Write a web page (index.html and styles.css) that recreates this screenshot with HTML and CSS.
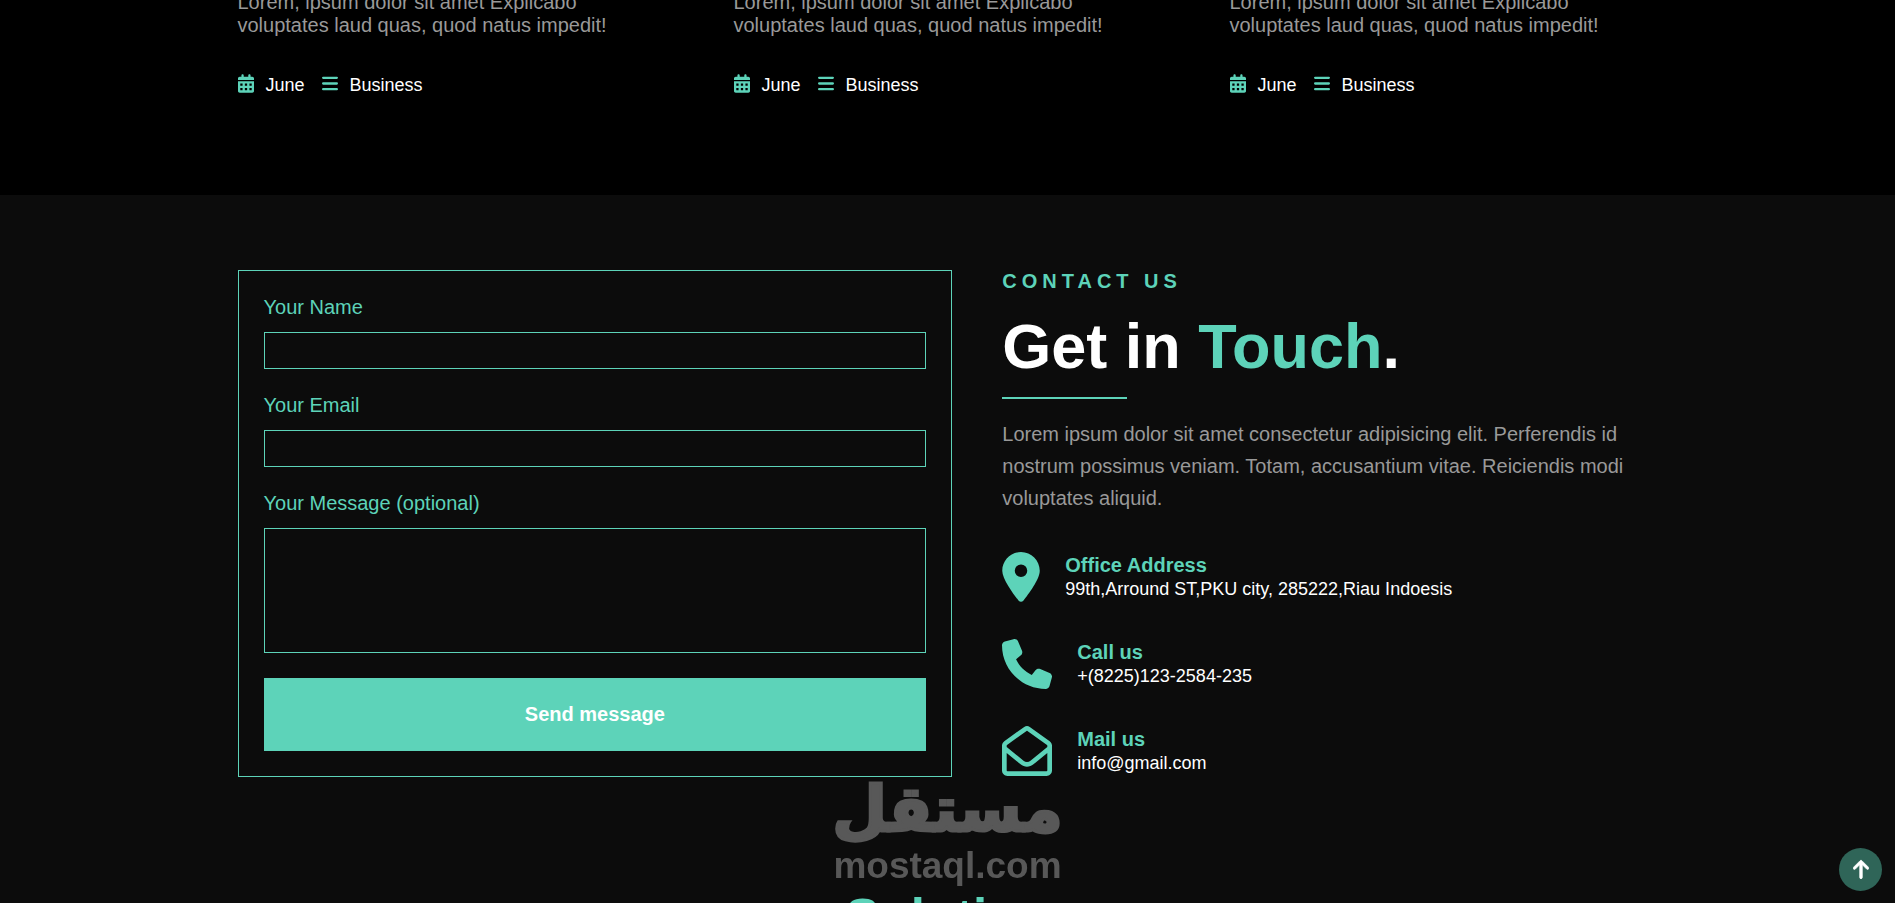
FILE: index.html
```
<!DOCTYPE html>
<html lang="en">
<head>
    <meta charset="UTF-8">
    <meta name="viewport" content="width=device-width, initial-scale=1.0">
    <title>Contact Us</title>
    <link rel="stylesheet" href="styles.css">
</head>
<body>
    <!-- shared icons -->
    <svg class="sprite" aria-hidden="true">
        <symbol id="calendar" viewBox="0 0 448 512">
            <path fill-rule="evenodd" d="M128 0c17.700 0 32 14.300 32 32V64H288V32c0-17.700 14.300-32 32-32s32 14.300 32 32V64h48c26.500 0 48 21.500 48 48v48H0V112C0 85.500 21.500 64 48 64H96V32c0-17.700 14.300-32 32-32zM0 192H448V464c0 26.500-21.500 48-48 48H48c-26.500 0-48-21.500-48-48V192zM64 256v64h64v-64zM192 256v64h64v-64zM320 256v64h64v-64zM64 384v64h64v-64zM192 384v64h64v-64zM320 384v64h64v-64z"/>
        </symbol>
        <symbol id="bars" viewBox="0 0 448 512">
            <path d="M32 64H416a32 32 0 0 1 0 64H32a32 32 0 0 1 0-64zM32 224H416a32 32 0 0 1 0 64H32a32 32 0 0 1 0-64zM32 384H416a32 32 0 0 1 0 64H32a32 32 0 0 1 0-64z"/>
        </symbol>
    </svg>

    <!-- Blog start -->
    <section class="blog">
        <div class="container blog-list">
            <article>
                <p>Lorem, ipsum dolor sit amet Explicabo voluptates laud quas, quod natus impedit!</p>
                <div class="meta">
                    <span><svg><use href="#calendar"/></svg>June</span>
                    <span><svg><use href="#bars"/></svg>Business</span>
                </div>
            </article>
            <article>
                <p>Lorem, ipsum dolor sit amet Explicabo voluptates laud quas, quod natus impedit!</p>
                <div class="meta">
                    <span><svg><use href="#calendar"/></svg>June</span>
                    <span><svg><use href="#bars"/></svg>Business</span>
                </div>
            </article>
            <article>
                <p>Lorem, ipsum dolor sit amet Explicabo voluptates laud quas, quod natus impedit!</p>
                <div class="meta">
                    <span><svg><use href="#calendar"/></svg>June</span>
                    <span><svg><use href="#bars"/></svg>Business</span>
                </div>
            </article>
        </div>
    </section>
    <!-- Blog end -->

    <!-- Contact start -->
    <section class="contact">
        <div class="container contact-grid">
            <form class="contact-form">
                <label for="name">Your Name</label>
                <input id="name" name="name" type="text">
                <label for="email">Your Email</label>
                <input id="email" name="email" type="email">
                <label for="message">Your Message (optional)</label>
                <textarea id="message" name="message"></textarea>
                <button type="submit">Send message</button>
            </form>

            <div class="contact-info">
                <h4>CONTACT US</h4>
                <h2>Get in <span>Touch</span>.</h2>
                <p>Lorem ipsum dolor sit amet consectetur adipisicing elit. Perferendis id nostrum possimus veniam. Totam, accusantium vitae. Reiciendis modi voluptates aliquid.</p>
                <ul>
                    <li>
                        <svg class="pin" viewBox="0 0 384 512"><path d="M215.700 499.200C267 435 384 279.400 384 192C384 86 298 0 192 0S0 86 0 192c0 87.400 117 243 168.300 307.200c12.300 15.300 35.100 15.300 47.400 0zM192 128a64 64 0 1 1 0 128 64 64 0 1 1 0-128z"/></svg>
                        <div>
                            <h5>Office Address</h5>
                            <address>99th,Arround ST,PKU city, 285222,Riau Indoesis</address>
                        </div>
                    </li>
                    <li>
                        <svg viewBox="0 0 512 512"><path d="M164.900 24.600c-7.700-18.600-28-28.500-47.400-23.200l-88 24C12.100 30.200 0 46 0 64C0 311.400 200.600 512 448 512c18 0 33.800-12.100 38.600-29.500l24-88c5.300-19.400-4.600-39.700-23.200-47.400l-96-40c-16.300-6.800-35.200-2.100-46.300 11.600L304.700 368C234.300 334.700 177.300 277.700 144 207.300L193.300 167c13.700-11.200 18.400-30 11.600-46.300l-40-96z"/></svg>
                        <div>
                            <h5>Call us</h5>
                            <a href="tel:82251232584235">+(8225)123-2584-235</a>
                        </div>
                    </li>
                    <li>
                        <svg viewBox="0 0 512 512"><path d="M255.400 48.200c.2-.1 .4-.2 .6-.2s.4 .1 .6 .2L460.600 194c2.100 1.500 3.400 3.900 3.400 6.500v13.600L291.500 355.700c-20.700 17-50.400 17-71.100 0L48 214.100V200.500c0-2.600 1.200-5 3.400-6.500L255.400 48.200zM48 276.200L190 392.800c38.400 31.500 93.700 31.500 132 0L464 276.200V456c0 4.400-3.600 8-8 8H56c-4.400 0-8-3.600-8-8V276.200zM256 0c-10.200 0-20.200 3.200-28.500 9.100L23.500 154.900C8.700 165.400 0 182.400 0 200.500V456c0 30.900 25.100 56 56 56H456c30.900 0 56-25.100 56-56V200.500c0-18.100-8.700-35.100-23.400-45.600L284.500 9.100C276.200 3.200 266.200 0 256 0z"/></svg>
                        <div>
                            <h5>Mail us</h5>
                            <a href="mailto:info@gmail.com">info@gmail.com</a>
                        </div>
                    </li>
                </ul>
            </div>
        </div>
    </section>
    <!-- Contact end -->

    <section class="solution">
        <h2>Solution</h2>
    </section>

    <div class="watermark">
        <span class="mark" lang="ar" dir="rtl">مستقل</span>
        <span>mostaql.com</span>
    </div>

    <a class="to-top" href="#" aria-label="Back to top">
        <svg viewBox="0 0 384 512"><path d="M214.600 41.400c-12.500-12.500-32.800-12.500-45.300 0l-160 160c-12.500 12.500-12.500 32.800 0 45.300s32.800 12.500 45.300 0L160 141.200V448c0 17.700 14.300 32 32 32s32-14.300 32-32V141.200L329.400 246.600c12.500 12.500 32.800 12.500 45.300 0s12.500-32.800 0-45.300l-160-160z"/></svg>
    </a>
</body>
</html>
```
FILE: styles.css
```
*{
    margin: 0;
    padding: 0;
    box-sizing: border-box;
}
:root{
    --main: #5dd3b9;
    --grey: #999;
    --dark: #0c0c0c;
}
body{
    height: 100vh;
    overflow: hidden;
    background-color: var(--dark);
    color: #fff;
    font-family: "Liberation Sans", Arial, sans-serif;
    font-size: 20px;
    line-height: 23px;
}
a{
    color: #fff;
    text-decoration: none;
}
svg{
    fill: var(--main);
}
.sprite{
    position: absolute;
    width: 0;
    height: 0;
}
.container{
    max-width: 1420px;
    margin: 0 auto;
}

/* blog */
.blog{
    margin-top: -9px;
    padding-bottom: 98px;
    background-color: #000;
}
.blog-list{
    display: grid;
    grid-template-columns: repeat(3, 1fr);
    gap: 68px;
}
.blog p{
    margin-bottom: 37px;
    padding-right: 40px;
    color: var(--grey);
}
.meta{
    display: flex;
    gap: 17px;
    font-size: 18px;
}
.meta span{
    display: flex;
    align-items: flex-start;
    gap: 12px;
}
.meta svg{
    width: 16px;
    height: 19px;
}

/* contact */
.contact{
    padding: 75px 0;
}
.contact-grid{
    display: grid;
    grid-template-columns: 12fr 11fr;
    gap: 50px;
}
.contact-form{
    display: flex;
    flex-direction: column;
    padding: 25px;
    border: 1px solid var(--main);
}
.contact-form label{
    margin-bottom: 13px;
    color: var(--main);
}
.contact-form input,
.contact-form textarea{
    height: 37px;
    margin-bottom: 25px;
    padding: 5px 10px;
    background: transparent;
    border: 1px solid var(--main);
    color: #fff;
    font: inherit;
    outline: none;
    resize: none;
}
.contact-form textarea{
    height: 125px;
}
.contact-form button{
    padding: 25px;
    border: none;
    background-color: var(--main);
    color: #fff;
    font: inherit;
    font-weight: bold;
    cursor: pointer;
}
.contact-info h4{
    margin-bottom: 16px;
    color: var(--main);
    font-size: 20px;
    letter-spacing: 5px;
}
.contact-info h2{
    font-size: 63px;
    line-height: 74px;
}
.contact-info h2 span{
    color: var(--main);
}
.contact-info h2::after{
    content: "";
    display: block;
    width: 125px;
    height: 2px;
    margin: 14px 0 19px;
    background-color: var(--main);
}
.contact-info p{
    margin-bottom: 38px;
    color: var(--grey);
    line-height: 32px;
}
.contact-info ul{
    display: flex;
    flex-direction: column;
    gap: 37px;
    list-style: none;
}
.contact-info li{
    display: flex;
    align-items: center;
    gap: 25px;
}
.contact-info li svg{
    width: 50px;
    height: 50px;
}
.contact-info li .pin{
    width: 38px;
}
.contact-info li div{
    padding-top: 2px;
}
.contact-info h5{
    color: var(--main);
    font-size: 20px;
}
.contact-info address,
.contact-info li a{
    display: block;
    font-size: 18px;
    font-style: normal;
    line-height: 25px;
}

/* solution */
.solution{
    padding-top: 37px;
    text-align: center;
}
.solution h2{
    color: var(--main);
    font-size: 51px;
    line-height: 58px;
}

/* watermark over the page */
.watermark{
    position: fixed;
    bottom: 17px;
    left: 0;
    right: 0;
    display: flex;
    flex-direction: column;
    align-items: center;
    color: #585858;
    font-size: 37px;
    font-weight: bold;
    line-height: 40px;
    pointer-events: none;
}
.watermark .mark{
    font-family: "DejaVu Sans", sans-serif;
    font-size: 63px;
    line-height: 72px;
    -webkit-text-stroke: 3px #585858;
}

.to-top{
    position: fixed;
    right: 13px;
    bottom: 12px;
    display: flex;
    align-items: center;
    justify-content: center;
    width: 43px;
    height: 43px;
    border-radius: 50%;
    background-color: #2f6558;
}
.to-top svg{
    width: 16px;
    height: 21px;
    fill: #fff;
    stroke: #fff;
    stroke-width: 16px;
}
```
